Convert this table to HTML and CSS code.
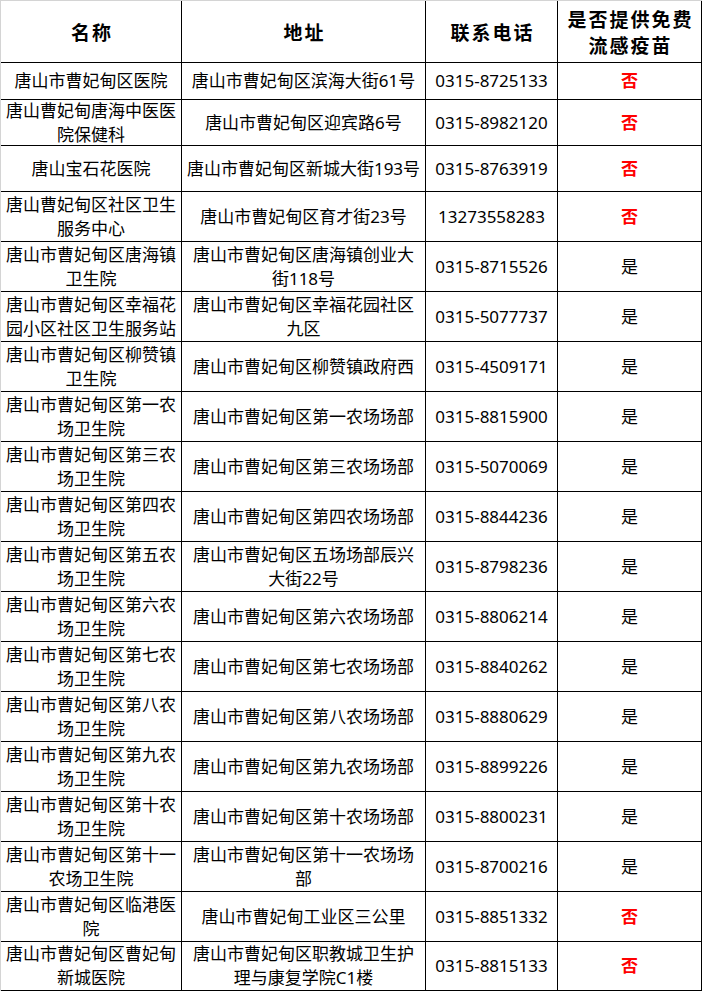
FILE: index.html
```html
<!DOCTYPE html>
<html lang="zh-CN">
<head>
<meta charset="utf-8">
<title>曹妃甸区流感疫苗接种点</title>
<link rel="stylesheet" href="styles.css">
</head>
<body>
<div class="sheet" role="table">
  <div class="row" role="row">
    <div class="cell head" role="columnheader">名称</div>
    <div class="cell head" role="columnheader">地址</div>
    <div class="cell head" role="columnheader">联系电话</div>
    <div class="cell head" role="columnheader">是否提供免费<br>流感疫苗</div>
  </div>
  <div class="row" role="row">
    <div class="cell">唐山市曹妃甸区医院</div>
    <div class="cell">唐山市曹妃甸区滨海大街61号</div>
    <div class="cell num">0315-8725133</div>
    <div class="cell no">否</div>
  </div>
  <div class="row" role="row">
    <div class="cell">唐山曹妃甸唐海中医医<br>院保健科</div>
    <div class="cell">唐山市曹妃甸区迎宾路6号</div>
    <div class="cell num">0315-8982120</div>
    <div class="cell no">否</div>
  </div>
  <div class="row" role="row">
    <div class="cell">唐山宝石花医院</div>
    <div class="cell">唐山市曹妃甸区新城大街193号</div>
    <div class="cell num">0315-8763919</div>
    <div class="cell no">否</div>
  </div>
  <div class="row" role="row">
    <div class="cell">唐山曹妃甸区社区卫生<br>服务中心</div>
    <div class="cell">唐山市曹妃甸区育才街23号</div>
    <div class="cell num">13273558283</div>
    <div class="cell no">否</div>
  </div>
  <div class="row" role="row">
    <div class="cell">唐山市曹妃甸区唐海镇<br>卫生院</div>
    <div class="cell">唐山市曹妃甸区唐海镇创业大<br>街118号</div>
    <div class="cell num">0315-8715526</div>
    <div class="cell">是</div>
  </div>
  <div class="row" role="row">
    <div class="cell">唐山市曹妃甸区幸福花<br>园小区社区卫生服务站</div>
    <div class="cell">唐山市曹妃甸区幸福花园社区<br>九区</div>
    <div class="cell num">0315-5077737</div>
    <div class="cell">是</div>
  </div>
  <div class="row" role="row">
    <div class="cell">唐山市曹妃甸区柳赞镇<br>卫生院</div>
    <div class="cell">唐山市曹妃甸区柳赞镇政府西</div>
    <div class="cell num">0315-4509171</div>
    <div class="cell">是</div>
  </div>
  <div class="row" role="row">
    <div class="cell">唐山市曹妃甸区第一农<br>场卫生院</div>
    <div class="cell">唐山市曹妃甸区第一农场场部</div>
    <div class="cell num">0315-8815900</div>
    <div class="cell">是</div>
  </div>
  <div class="row" role="row">
    <div class="cell">唐山市曹妃甸区第三农<br>场卫生院</div>
    <div class="cell">唐山市曹妃甸区第三农场场部</div>
    <div class="cell num">0315-5070069</div>
    <div class="cell">是</div>
  </div>
  <div class="row" role="row">
    <div class="cell">唐山市曹妃甸区第四农<br>场卫生院</div>
    <div class="cell">唐山市曹妃甸区第四农场场部</div>
    <div class="cell num">0315-8844236</div>
    <div class="cell">是</div>
  </div>
  <div class="row" role="row">
    <div class="cell">唐山市曹妃甸区第五农<br>场卫生院</div>
    <div class="cell">唐山市曹妃甸区五场场部辰兴<br>大街22号</div>
    <div class="cell num">0315-8798236</div>
    <div class="cell">是</div>
  </div>
  <div class="row" role="row">
    <div class="cell">唐山市曹妃甸区第六农<br>场卫生院</div>
    <div class="cell">唐山市曹妃甸区第六农场场部</div>
    <div class="cell num">0315-8806214</div>
    <div class="cell">是</div>
  </div>
  <div class="row" role="row">
    <div class="cell">唐山市曹妃甸区第七农<br>场卫生院</div>
    <div class="cell">唐山市曹妃甸区第七农场场部</div>
    <div class="cell num">0315-8840262</div>
    <div class="cell">是</div>
  </div>
  <div class="row" role="row">
    <div class="cell">唐山市曹妃甸区第八农<br>场卫生院</div>
    <div class="cell">唐山市曹妃甸区第八农场场部</div>
    <div class="cell num">0315-8880629</div>
    <div class="cell">是</div>
  </div>
  <div class="row" role="row">
    <div class="cell">唐山市曹妃甸区第九农<br>场卫生院</div>
    <div class="cell">唐山市曹妃甸区第九农场场部</div>
    <div class="cell num">0315-8899226</div>
    <div class="cell">是</div>
  </div>
  <div class="row" role="row">
    <div class="cell">唐山市曹妃甸区第十农<br>场卫生院</div>
    <div class="cell">唐山市曹妃甸区第十农场场部</div>
    <div class="cell num">0315-8800231</div>
    <div class="cell">是</div>
  </div>
  <div class="row" role="row">
    <div class="cell">唐山市曹妃甸区第十一<br>农场卫生院</div>
    <div class="cell">唐山市曹妃甸区第十一农场场<br>部</div>
    <div class="cell num">0315-8700216</div>
    <div class="cell">是</div>
  </div>
  <div class="row" role="row">
    <div class="cell">唐山市曹妃甸区临港医<br>院</div>
    <div class="cell">唐山市曹妃甸工业区三公里</div>
    <div class="cell num">0315-8851332</div>
    <div class="cell no">否</div>
  </div>
  <div class="row" role="row">
    <div class="cell">唐山市曹妃甸区曹妃甸<br>新城医院</div>
    <div class="cell">唐山市曹妃甸区职教城卫生护<br>理与康复学院C1楼</div>
    <div class="cell num">0315-8815133</div>
    <div class="cell no">否</div>
  </div>
</div>
</body>
</html>
```

FILE: styles.css
```css
html, body {
  margin: 0;
  padding: 0;
  background: #fff;
}

.sheet {
  display: grid;
  grid-template-columns: 181px 244px 132px 144px;
  grid-template-rows: 62px 37px 46px 46px repeat(15, 50px);
  width: max-content;
  border-left: 1px solid #d4d4d4;
  border-top: 1px solid #d4d4d4;
  font-family: "Noto Sans", "Noto Sans CJK SC", sans-serif;
  font-size: 17px;
  line-height: 24px;
  color: #000;
}

.row {
  display: contents;
}

.cell {
  box-sizing: border-box;
  border-right: 1px solid #000;
  border-bottom: 1px solid #000;
  display: flex;
  align-items: center;
  justify-content: center;
  text-align: center;
  white-space: nowrap;
  overflow: hidden;
}

.head {
  font-family: "Noto Sans CJK SC", sans-serif;
  font-weight: 700;
  font-size: 19px;
  line-height: 26px;
  letter-spacing: 2px;
  padding-left: 2px;
}

.no {
  color: #ff0000;
  font-weight: 700;
}
```
